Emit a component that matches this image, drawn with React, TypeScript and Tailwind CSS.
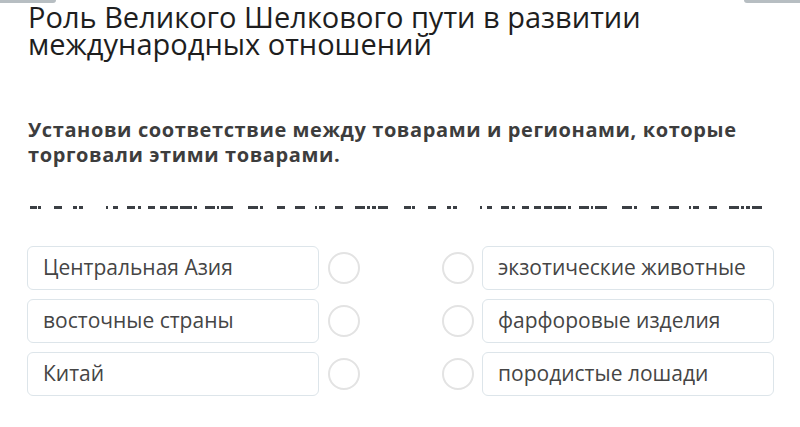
import React from "react";

const left = ["Центральная Азия", "восточные страны", "Китай"];
const right = ["экзотические животные", "фарфоровые изделия", "породистые лошади"];

const segs: [number, number][] = [
  [1, 8], [9, 12], [25, 33], [44, 48], [50, 54], [77, 79], [84, 89], [98, 106],
  [109, 112], [119, 126], [131, 138], [141, 149], [151, 163], [165, 168],
  [176, 186], [188, 190], [192, 204], [219, 229], [231, 234], [248, 256],
  [266, 276], [286, 288], [290, 296], [306, 314], [326, 336], [338, 341], [343, 347], [349, 359],
];

function Dashes() {
  return (
    <svg width="745" height="5" viewBox="0 0 745 5" className="block">
      {segs.map(([a, b], i) => (
        <rect key={"l" + i} x={a} y={1} width={b - a} height={3} fill="#3b3f44" />
      ))}
      {segs.map(([a, b], i) => (
        <rect key={"r" + i} x={a + 374} y={1} width={b - a} height={3} fill="#3b3f44" />
      ))}
    </svg>
  );
}

function Box({ text }: { text: string }) {
  return (
    <div className="w-[292px] h-[44px] rounded-[6px] border border-[#dde5ea] bg-white flex items-center pl-[15px] text-[21px] text-[#454545] [font-family:'Open_Sans',sans-serif]">
      {text}
    </div>
  );
}

function Circle() {
  return <div className="w-[32px] h-[32px] rounded-full border-2 border-[#e3e3e3] bg-white" />;
}

export default function App() {
  return (
    <div className="w-[800px] h-[427px] bg-white overflow-hidden [font-family:'Open_Sans',sans-serif]">
      <div className="h-[3px] flex justify-between">
        <div className="w-[56px] h-[3px] bg-[#b7bec2] rounded-br-[3px]" />
        <div className="w-[56px] h-[3px] bg-[#b7bec2] rounded-bl-[3px]" />
      </div>
      <h1 className="pl-[28px] text-[29px] leading-[27px] text-[#1e1e1e] font-normal">
        Роль Великого Шелкового пути в развитии
        <br />
        международных отношений
      </h1>
      <p className="pl-[28px] mt-[60px] text-[20px] leading-[25px] font-bold text-[#3d3d3d] tracking-[0.6px]">
        Установи соответствие между товарами и регионами, которые
        <br />
        торговали этими товарами.
      </p>
      <div className="pl-[29px] mt-[38px]">
        <Dashes />
      </div>
      <div className="mt-[36px] pl-[27px] flex flex-col gap-[9px]">
        {left.map((l, i) => (
          <div key={i} className="flex items-center">
            <Box text={l} />
            <div className="ml-[9px]">
              <Circle />
            </div>
            <div className="ml-[82px]">
              <Circle />
            </div>
            <div className="ml-[8px]">
              <Box text={right[i]} />
            </div>
          </div>
        ))}
      </div>
    </div>
  );
}
